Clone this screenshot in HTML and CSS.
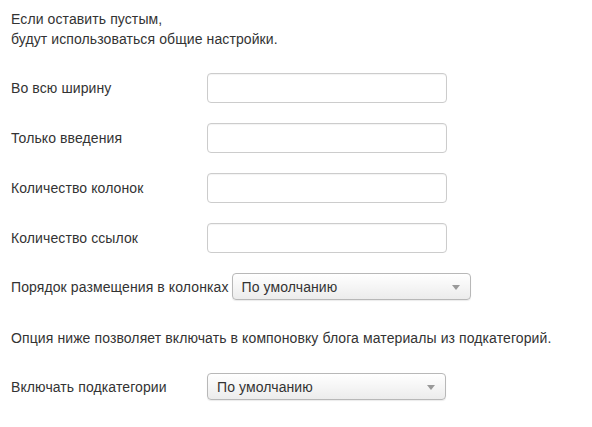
FILE: index.html
```html
<!DOCTYPE html>
<html lang="ru">
<head>
<meta charset="utf-8">
<link rel="stylesheet" href="styles.css">
</head>
<body>
<div class="page">
  <p class="intro">Если оставить пустым,<br>будут использоваться общие настройки.</p>
  <div class="row">
    <label class="lbl">Во всю ширину</label>
    <div class="input"></div>
  </div>
  <div class="row">
    <label class="lbl">Только введения</label>
    <div class="input"></div>
  </div>
  <div class="row">
    <label class="lbl">Количество колонок</label>
    <div class="input"></div>
  </div>
  <div class="row">
    <label class="lbl">Количество ссылок</label>
    <div class="input"></div>
  </div>
  <div class="row row-select">
    <label class="lbl">Порядок размещения в колонках</label>
    <div class="select"><span>По умолчанию</span><i class="arrow"></i></div>
  </div>
  <p class="note">Опция ниже позволяет включать в компоновку блога материалы из подкатегорий.</p>
  <div class="row row-select">
    <label class="lbl">Включать подкатегории</label>
    <div class="select"><span>По умолчанию</span><i class="arrow"></i></div>
  </div>
</div>
</body>
</html>
```
FILE: styles.css
```css
html, body {
  margin: 0;
  padding: 0;
  background: #fff;
}
body {
  font-family: "Liberation Sans", Arial, sans-serif;
  font-size: 14px;
  letter-spacing: 0.1px;
  color: #333;
}
.page {
  padding: 9px 0 0 11px;
}
.intro {
  margin: 0 0 24px;
  line-height: 20px;
}
.row {
  display: flex;
  align-items: center;
  margin-bottom: 20px;
}
.lbl {
  min-width: 193px;
  padding-right: 3px;
  line-height: 18px;
  white-space: nowrap;
}
.input {
  width: 238px;
  height: 28px;
  border: 1px solid #ccc;
  border-radius: 4px;
  background: #fff;
  box-shadow: inset 0 1px 1px rgba(0,0,0,0.05);
}
.row-select {
  margin-top: 1px;
}
.select {
  position: relative;
  box-sizing: border-box;
  width: 239px;
  height: 27px;
  border: 1px solid #b8b8b8;
  border-radius: 4px;
  background: linear-gradient(#ffffff, #ececec);
  box-shadow: 0 1px 1px rgba(0,0,0,0.08);
  display: flex;
  align-items: center;
  padding-left: 9px;
  color: #333;
}
.arrow {
  position: absolute;
  right: 10px;
  top: 11px;
  width: 0;
  height: 0;
  border-left: 4px solid transparent;
  border-right: 4px solid transparent;
  border-top: 5px solid #999;
}
.note {
  margin: 0 0 25px;
  line-height: 20px;
  padding-top: 8px;
}
```
